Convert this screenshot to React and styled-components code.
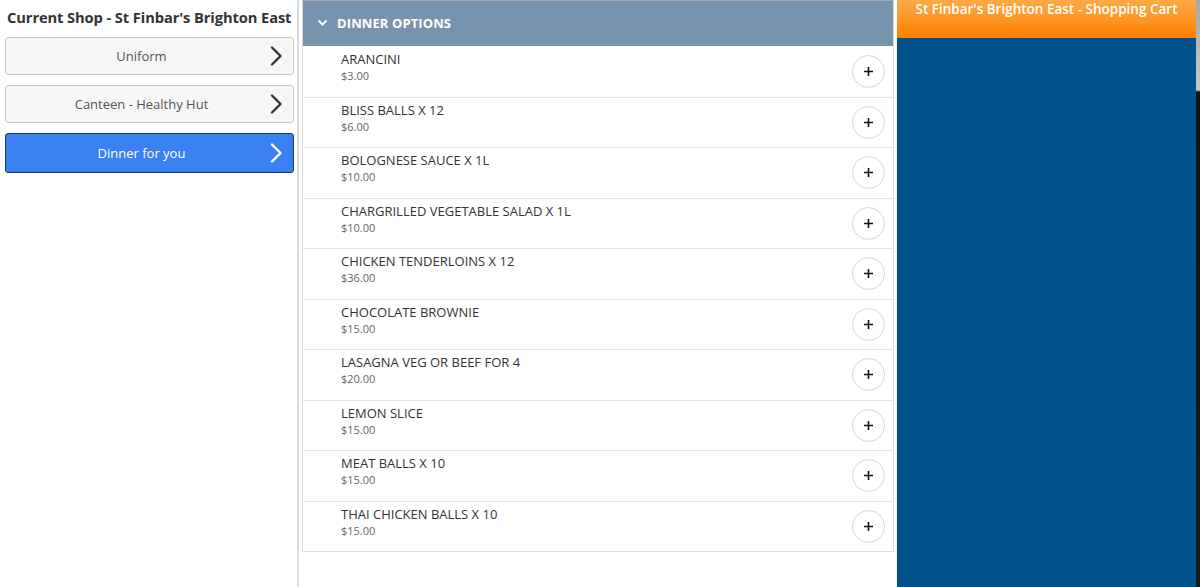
import React from "react";
import styled, { createGlobalStyle } from "styled-components";

const Global = createGlobalStyle`
  html, body { margin: 0; padding: 0; background: #fff; }
  body { font-family: "Open Sans", "Noto Sans", Arial, sans-serif; }
  * { box-sizing: border-box; }
`;

const Page = styled.div`
  display: flex;
  width: 1200px;
  height: 587px;
  overflow: hidden;
  background: #fff;
`;

const Sidebar = styled.aside`
  width: 299px;
  flex: none;
  border-right: 2px solid #dcdcdc;
  padding: 7px 5px 0 5px;
  display: flex;
  flex-direction: column;
  gap: 10px;
`;

const ShopTitle = styled.h1`
  margin: 0 0 0 2px;
  font-size: 14.7px;
  font-weight: 700;
  color: #333;
  white-space: nowrap;
  letter-spacing: -0.1px;
  line-height: 20px;
`;

const ShopButton = styled.button`
  display: flex;
  align-items: center;
  width: 289px;
  height: ${(p) => (p.$active ? 40 : 38)}px;
  padding: 0 10px 0 0;
  border-radius: 3px;
  border: 1px solid ${(p) => (p.$active ? "#16386e" : "#c8c8c8")};
  background: ${(p) => (p.$active ? "#3b80f0" : "#f6f6f6")};
  color: ${(p) => (p.$active ? "#fff" : "#555")};
  font-family: inherit;
  font-size: 13px;
  cursor: pointer;
`;

const ButtonLabel = styled.span`
  flex: 1;
  text-align: center;
  padding-left: 8px;
`;

const Chevron = styled.svg`
  width: 14px;
  height: 22px;
  flex: none;
`;

const Middle = styled.main`
  width: 592px;
  flex: none;
  margin-left: 3px;
  align-self: flex-start;
  border: 1px solid #dcdcdc;
  border-top: 1px solid #a9a9a9;
`;

const SectionHeader = styled.div`
  height: 45px;
  background: #7893ad;
  display: flex;
  align-items: center;
  gap: 9px;
  padding: 0 0 1px 14px;
  color: #fff;
  font-weight: 700;
  font-size: 13px;
  letter-spacing: 0.1px;
`;

const ItemRow = styled.div`
  height: 50.5px;
  display: flex;
  align-items: center;
  justify-content: space-between;
  padding: 0 8px 0 38px;
  border-top: ${(p) => (p.$first ? "none" : "1px solid #e2e2e2")};
`;

const ItemInfo = styled.div`
  display: flex;
  flex-direction: column;
  margin-bottom: 9px;
`;

const ItemName = styled.span`
  font-size: 13px;
  color: #333;
  line-height: 18px;
`;

const ItemPrice = styled.span`
  font-size: 11px;
  color: #666;
  line-height: 16px;
`;

const AddButton = styled.button`
  width: 33px;
  height: 33px;
  border-radius: 50%;
  border: 1px solid #d6d6d6;
  background: #fff;
  display: flex;
  align-items: center;
  justify-content: center;
  padding: 0;
  cursor: pointer;
`;

const Cart = styled.section`
  width: 299px;
  flex: none;
  margin-left: 3px;
  background: #02528c;
  display: flex;
  flex-direction: column;
`;

const CartHeader = styled.div`
  height: 38px;
  background: linear-gradient(#fdab48, #fe7f00);
  color: #fff;
  font-size: 13.5px;
  font-weight: 600;
  text-align: center;
  line-height: 19px;
`;

const ScrollTrack = styled.div`
  width: 4px;
  flex: none;
  background: linear-gradient(#a8a8a8 0, #c8c8c8 90px, #111 92px, #1a1a1a 100%);
`;

const items = [
  ["ARANCINI", "$3.00"],
  ["BLISS BALLS X 12", "$6.00"],
  ["BOLOGNESE SAUCE X 1L", "$10.00"],
  ["CHARGRILLED VEGETABLE SALAD X 1L", "$10.00"],
  ["CHICKEN TENDERLOINS X 12", "$36.00"],
  ["CHOCOLATE BROWNIE", "$15.00"],
  ["LASAGNA VEG OR BEEF FOR 4", "$20.00"],
  ["LEMON SLICE", "$15.00"],
  ["MEAT BALLS X 10", "$15.00"],
  ["THAI CHICKEN BALLS X 10", "$15.00"],
];

const shops = [
  { name: "Uniform" },
  { name: "Canteen - Healthy Hut" },
  { name: "Dinner for you", active: true },
];

const RightChevron = ({ color }) => (
  <Chevron viewBox="0 0 14 22">
    <path d="M3 2.5 L11.5 11 L3 19.5" fill="none" stroke={color} strokeWidth="2.4" strokeLinecap="round" strokeLinejoin="round" />
  </Chevron>
);

export default function App() {
  return (
    <>
      <Global />
      <Page>
        <Sidebar>
          <ShopTitle>Current Shop - St Finbar's Brighton East</ShopTitle>
          {shops.map((s) => (
            <ShopButton key={s.name} $active={s.active}>
              <ButtonLabel>{s.name}</ButtonLabel>
              <RightChevron color={s.active ? "#fff" : "#333"} />
            </ShopButton>
          ))}
        </Sidebar>
        <Middle>
          <SectionHeader>
            <svg width="11" height="8" viewBox="0 0 11 8">
              <path d="M1.5 1.5 L5.5 5.5 L9.5 1.5" fill="none" stroke="#fff" strokeWidth="2" />
            </svg>
            DINNER OPTIONS
          </SectionHeader>
          {items.map(([name, price], i) => (
            <ItemRow key={name} $first={i === 0}>
              <ItemInfo>
                <ItemName>{name}</ItemName>
                <ItemPrice>{price}</ItemPrice>
              </ItemInfo>
              <AddButton aria-label="Add">
                <svg width="11" height="11" viewBox="0 0 11 11">
                  <path d="M5.5 1 V10 M1 5.5 H10" stroke="#111" strokeWidth="1.6" />
                </svg>
              </AddButton>
            </ItemRow>
          ))}
        </Middle>
        <Cart>
          <CartHeader>St Finbar's Brighton East - Shopping Cart</CartHeader>
        </Cart>
        <ScrollTrack />
      </Page>
    </>
  );
}
